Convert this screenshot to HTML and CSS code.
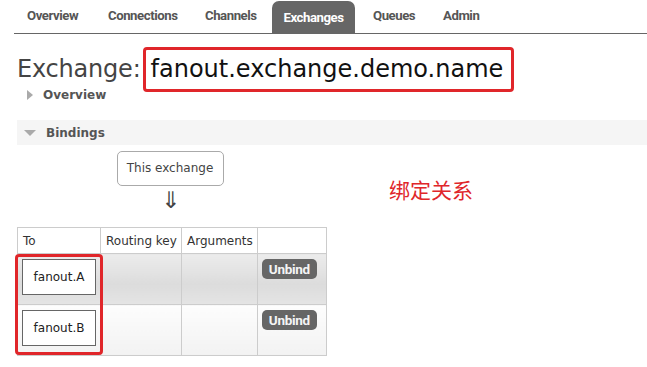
FILE: index.html
```html
<!DOCTYPE html>
<html>
<head>
<meta charset="utf-8">
<link rel="stylesheet" href="styles.css">
</head>
<body>
<nav class="tabs">
  <a class="tab">Overview</a>
  <a class="tab">Connections</a>
  <a class="tab">Channels</a>
  <a class="tab active">Exchanges</a>
  <a class="tab">Queues</a>
  <a class="tab">Admin</a>
</nav>
<main class="main">
  <h1 class="title"><span class="label">Exchange:</span><span class="name">fanout.exchange.demo.name</span></h1>
  <div class="section collapsed"><span class="tri right"></span>Overview</div>
  <div class="section open"><span class="tri down"></span>Bindings</div>
  <div class="bindings">
    <div class="flow">
      <div class="this-ex">This exchange</div>
      <div class="arrow">⇓</div>
    </div>
    <div class="note">绑定关系</div>
  </div>
  <div class="table-wrap">
    <table class="list">
      <thead>
        <tr><th class="c-to">To</th><th class="c-rk">Routing key</th><th class="c-args">Arguments</th><th class="c-act"></th></tr>
      </thead>
      <tbody>
        <tr class="alt1"><td><span class="q">fanout.A</span></td><td></td><td></td><td><button class="unbind">Unbind</button></td></tr>
        <tr class="alt2"><td><span class="q">fanout.B</span></td><td></td><td></td><td><button class="unbind">Unbind</button></td></tr>
      </tbody>
    </table>
    <div class="hl-box"></div>
  </div>
</main>
</body>
</html>
```
FILE: styles.css
```css
* { box-sizing: border-box; }
html, body { margin: 0; padding: 0; background: #fff; }
body { font-family: "DejaVu Sans", Verdana, sans-serif; color: #484848; width: 647px; height: 367px; overflow: hidden; }

.tabs { display: flex; margin-left: 14px; height: 34px; border-bottom: 1px solid #666; align-items: flex-end; }
.tab { font-family: Roboto, "DejaVu Sans Condensed", sans-serif; font-weight: bold; font-size: 13.2px; letter-spacing: -0.45px; color: #555; line-height: 14px; padding-bottom: 10px; white-space: nowrap; }
.tab:nth-child(1) { width: 94px; padding-left: 13px; }
.tab:nth-child(2) { width: 97px; }
.tab:nth-child(3) { width: 67px; }
.tab.active { width: 83px; background: #666; color: #fff; border-radius: 7px 7px 0 0; padding: 10px 0 9px 0; height: 32px; text-align: center; }
.tab:nth-child(5) { width: 88px; padding-left: 18px; }
.tab:nth-child(6) { width: 60px; }

.main { padding-left: 17px; }
.title { margin: 13px 0 0 0; font-weight: normal; font-size: 24px; display: flex; align-items: center; height: 44px; }
.label { color: #444; letter-spacing: -0.2px; }
.name { color: #111; border: 3px solid #e0262a; border-radius: 4px; padding: 5px 8px 6px 5px; margin-left: 2px; }

.section { font-weight: bold; font-size: 12px; color: #555; height: 25px; display: flex; align-items: center; padding-left: 7px; }
.section.collapsed { margin-top: -7px; height: 22px; }
.section.open { background: #f5f5f5; margin-top: 14px; }
.tri { display: inline-block; width: 0; height: 0; margin-right: 10px; }
.tri.right { border-top: 5px solid transparent; border-bottom: 5px solid transparent; border-left: 6px solid #aaa; margin-left: 3px; }
.tri.down { border-left: 6px solid transparent; border-right: 6px solid transparent; border-top: 6px solid #aaa; }

.bindings { display: flex; height: 82px; }
.flow { width: 309px; display: flex; flex-direction: column; align-items: center; padding-top: 6px; }
.this-ex { border: 1px solid #aaa; border-radius: 5px; font-size: 12px; color: #444; height: 35px; line-height: 33px; background: #fff; width: 107px; text-align: center; white-space: nowrap; margin-left: -3px; }
.arrow { font-size: 23px; color: #444; margin-top: 1px; line-height: 26px; margin-left: -1px; }
.note { color: #e0262a; font-family: "Noto Sans CJK SC", sans-serif; font-size: 21px; margin-left: 63px; margin-top: 30px; line-height: 28px; height: 28px; }

.table-wrap { position: relative; display: inline-block; }
.list { border-collapse: collapse; font-size: 12px; color: #333; }
.list th, .list td { border: 1px solid #ccc; vertical-align: top; text-align: left; }
.list th { font-weight: normal; height: 26px; padding: 6px 4px 0 5px; }
.c-to { width: 83px; }
.c-rk { width: 81px; }
.c-args { width: 75px; }
.c-act { width: 69px; }
.list td { height: 51px; padding: 5px 4px; }
.alt1 td { background: linear-gradient(#ececec, #dcdcdc 60%, #e4e4e4); }
.alt2 td { background: linear-gradient(#fdfdfd, #f2f2f2); }
.q { display: inline-block; border: 1px solid #666; background: #fff; width: 74px; height: 36px; line-height: 34px; text-align: center; color: #222; font-size: 12px; }
.unbind { font-family: Roboto, "DejaVu Sans Condensed", sans-serif; font-weight: bold; font-size: 13.5px; letter-spacing: -0.3px; color: #f4f4f4; background: #666; border: none; border-radius: 5px; padding: 0; width: 55px; height: 20px; line-height: 18px; }

.hl-box { position: absolute; left: -2px; top: 27px; width: 88px; height: 101px; border: 3px solid #e0262a; border-radius: 4px; pointer-events: none; }
```
